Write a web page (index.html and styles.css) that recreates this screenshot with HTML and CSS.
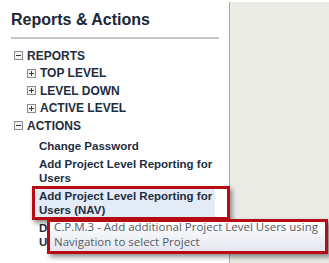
FILE: index.html
```html
<html>
<head>
<title>Reports &amp; Actions</title>
<meta http-equiv="Content-Type" content="text/html; charset=UTF-8"/>
<link rel="stylesheet" href="styles.css">
</head>
<body>
	<div class="page">
		<div class="sidebar">
			<h1 class="title">Reports &amp; Actions</h1>
			<ul class="tree">
				<li>
					<div class="node">
						<svg class="toggle" width="9" height="9" viewBox="0 0 9 9"><rect x="0.5" y="0.5" width="8" height="8" fill="#f4f4f4" stroke="#8c8c8c"/><path d="M2 4.5h5" stroke="#3a3a3a"/></svg>
						REPORTS
					</div>
					<ul class="tree-sub">
						<li class="node">
							<svg class="toggle" width="9" height="9" viewBox="0 0 9 9"><rect x="0.5" y="0.5" width="8" height="8" fill="#f4f4f4" stroke="#8c8c8c"/><path d="M2 4.5h5M4.5 2v5" stroke="#3a3a3a"/></svg>
							TOP LEVEL
						</li>
						<li class="node">
							<svg class="toggle" width="9" height="9" viewBox="0 0 9 9"><rect x="0.5" y="0.5" width="8" height="8" fill="#f4f4f4" stroke="#8c8c8c"/><path d="M2 4.5h5M4.5 2v5" stroke="#3a3a3a"/></svg>
							LEVEL DOWN
						</li>
						<li class="node">
							<svg class="toggle" width="9" height="9" viewBox="0 0 9 9"><rect x="0.5" y="0.5" width="8" height="8" fill="#f4f4f4" stroke="#8c8c8c"/><path d="M2 4.5h5M4.5 2v5" stroke="#3a3a3a"/></svg>
							ACTIVE LEVEL
						</li>
					</ul>
				</li>
				<li>
					<div class="node">
						<svg class="toggle" width="9" height="9" viewBox="0 0 9 9"><rect x="0.5" y="0.5" width="8" height="8" fill="#f4f4f4" stroke="#8c8c8c"/><path d="M2 4.5h5" stroke="#3a3a3a"/></svg>
						ACTIONS
					</div>
					<ul class="actions">
						<li class="action">Change Password</li>
						<li class="action">Add Project Level Reporting for Users</li>
						<li class="action action-hover">
							Add Project Level Reporting for Users (NAV)
							<div class="tooltip">
								<div class="tooltip-text">C.P.M.3 - Add additional Project Level Users using Navigation to select Project</div>
							</div>
						</li>
						<li class="action">Delete Project Level Reporting for Users</li>
					</ul>
				</li>
			</ul>
		</div>
		<div class="content"></div>
	</div>
</body>
</html>
```

FILE: styles.css
```css
body
{
	margin: 0;
	padding: 0;
	background-color: #fff;
	font-family: "Liberation Sans", Arial, sans-serif;
	color: #1e2d40;
}

.page
{
	display: flex;
	height: 263px;
}

.sidebar
{
	width: 229px;
	flex-shrink: 0;
	padding-left: 11px;
	box-sizing: border-box;
}

.title
{
	margin: 0 10px 0 0;
	padding: 10px 0 7px 0;
	font-size: 16px;
	line-height: 20px;
	font-weight: bold;
	color: #1b2636;
	border-bottom: 2px solid #c6c6c6;
}

.tree, .tree-sub, .actions
{
	list-style: none;
	margin: 0;
	padding: 0;
}

.tree
{
	margin-top: 8px;
	padding-left: 3px;
}

.tree-sub
{
	padding-left: 13px;
}

.node
{
	display: flex;
	align-items: center;
	gap: 4px;
	height: 17.5px;
	font-size: 12px;
	font-weight: bold;
}

.toggle
{
	flex-shrink: 0;
}

.actions
{
	padding-left: 25px;
	padding-top: 2px;
}

.action
{
	padding: 2px 0;
	font-size: 11.5px;
	line-height: 14px;
	font-weight: bold;
}

.action-hover
{
	position: relative;
	margin: -1px -1px -1px -7px;
	padding: 0 0 0 4px;
	border: 3px solid #b80c14;
	background: linear-gradient(to right, #e2ebf6 0, #e2ebf6 180px, #fff 180px);
	box-shadow: 2px 3px 5px rgba(0,0,0,0.45);
	z-index: 1;
}

.tooltip
{
	position: absolute;
	left: 12px;
	top: 30px;
	width: 271px;
	padding: 0 0 2px 4px;
	border: 3px solid #b80c14;
	background: linear-gradient(#ffffff, #e4e6ef);
	box-shadow: 3px 3px 5px rgba(0,0,0,0.45);
	font-family: "Open Sans", "Noto Sans", sans-serif;
	font-weight: normal;
	font-size: 11.5px;
	line-height: 15px;
	color: #575b63;
}

.tooltip-text
{
	margin-top: -3px;
}

.content
{
	flex: 1;
	margin-top: 2px;
	background-color: #ebebe6;
	border-left: 1px solid #a8a8a8;
}
```
